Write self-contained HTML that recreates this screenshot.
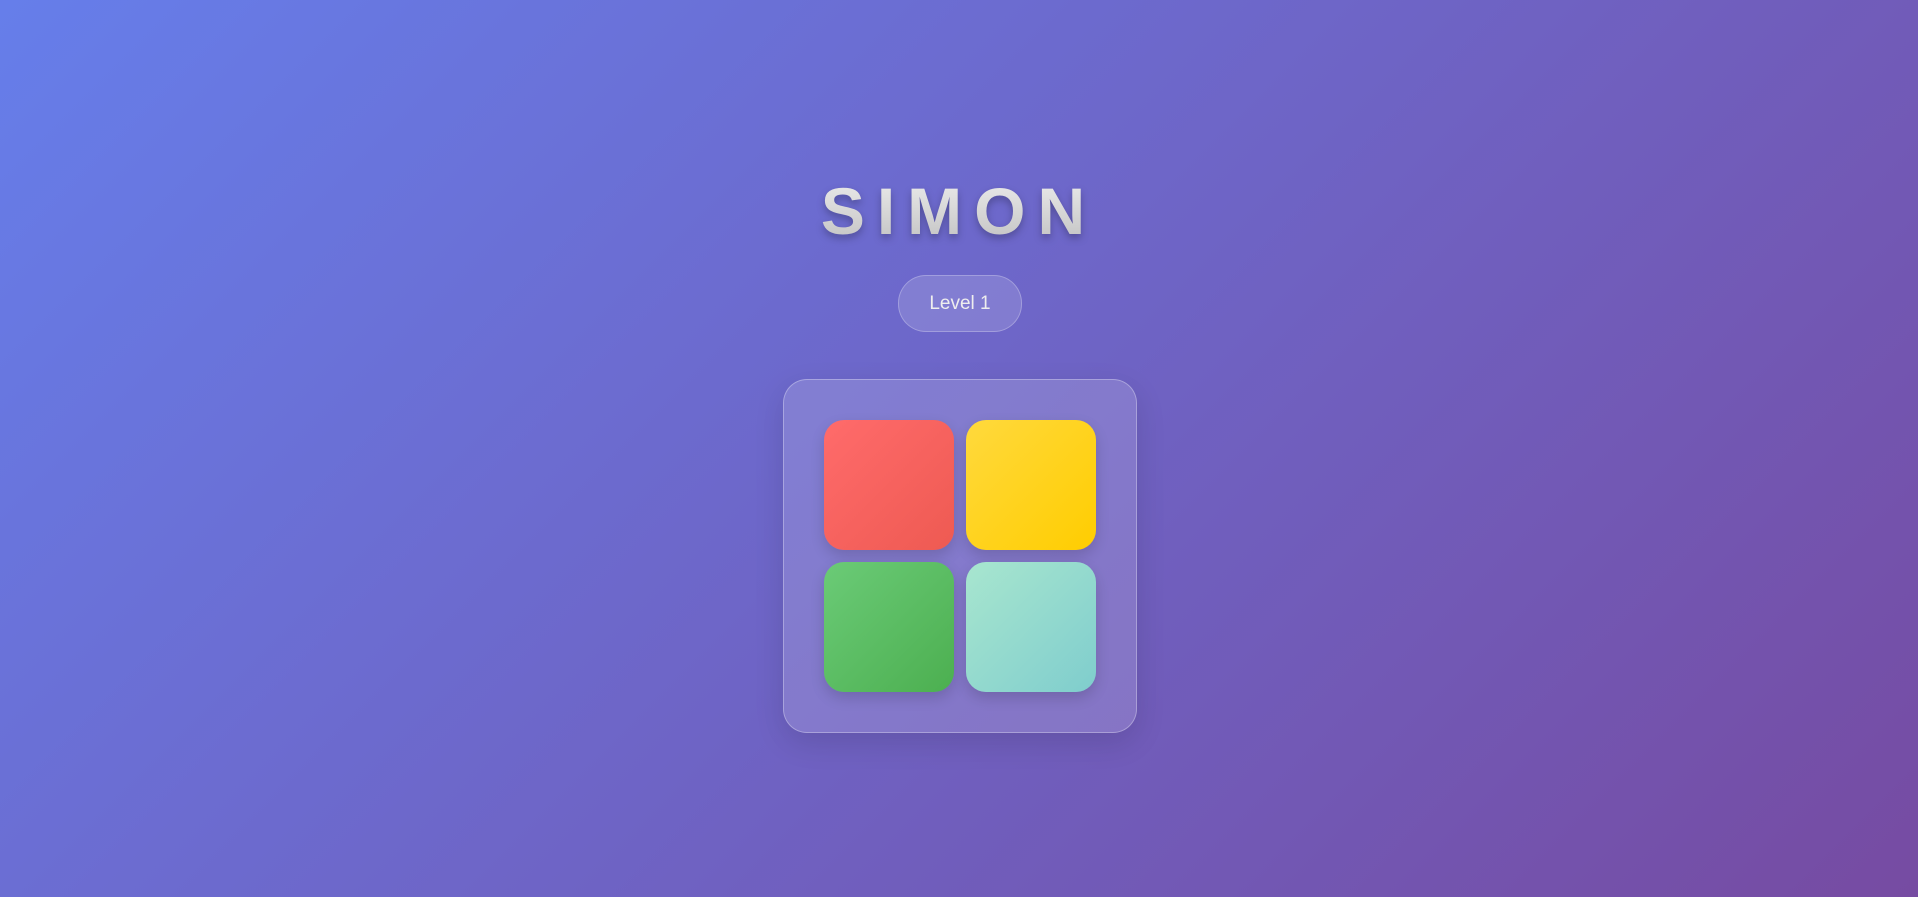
<!DOCTYPE html>
<html><head><meta charset="utf-8"><style>
html,body{margin:0;width:1918px;height:897px;overflow:hidden}
body{background:linear-gradient(135deg,#667eea 0%,#764ba2 100%);font-family:"Liberation Sans",sans-serif;position:relative}
h1{position:absolute;left:0;width:1918px;top:176px;margin:0;text-align:center;font-size:66px;font-weight:bold;letter-spacing:12px;text-indent:0;color:#d0d0d0;line-height:70px;
background:linear-gradient(#ececec,#c2c2c2);-webkit-background-clip:text;background-clip:text;-webkit-text-fill-color:transparent;filter:drop-shadow(0 4px 4px rgba(0,0,0,.25))}
.pill{position:absolute;left:898px;top:275px;width:122px;height:55px;border-radius:28px;background:rgba(255,255,255,.15);border:1px solid rgba(255,255,255,.25);color:#eee;font-size:19px;line-height:55px;text-align:center}
.board{position:absolute;left:783px;top:379px;width:352px;height:352px;border-radius:24px;background:rgba(255,255,255,.15);border:1px solid rgba(255,255,255,.3);box-shadow:0 10px 30px rgba(0,0,0,.12)}
.t{position:absolute;width:130px;height:130px;border-radius:20px;box-shadow:0 6px 14px rgba(0,0,0,.15)}
</style></head><body>
<h1>SIMON</h1>
<div class="pill">Level 1</div>
<div class="board">
<div class="t" style="left:40px;top:40px;background:linear-gradient(135deg,#ff6b6b,#ee5a52)"></div>
<div class="t" style="left:182px;top:40px;background:linear-gradient(135deg,#ffd93d,#ffcd00)"></div>
<div class="t" style="left:40px;top:182px;background:linear-gradient(135deg,#6bcb77,#4caf50)"></div>
<div class="t" style="left:182px;top:182px;background:linear-gradient(135deg,#a8e6cf,#7fcdcd)"></div>
</div>
</body></html>
